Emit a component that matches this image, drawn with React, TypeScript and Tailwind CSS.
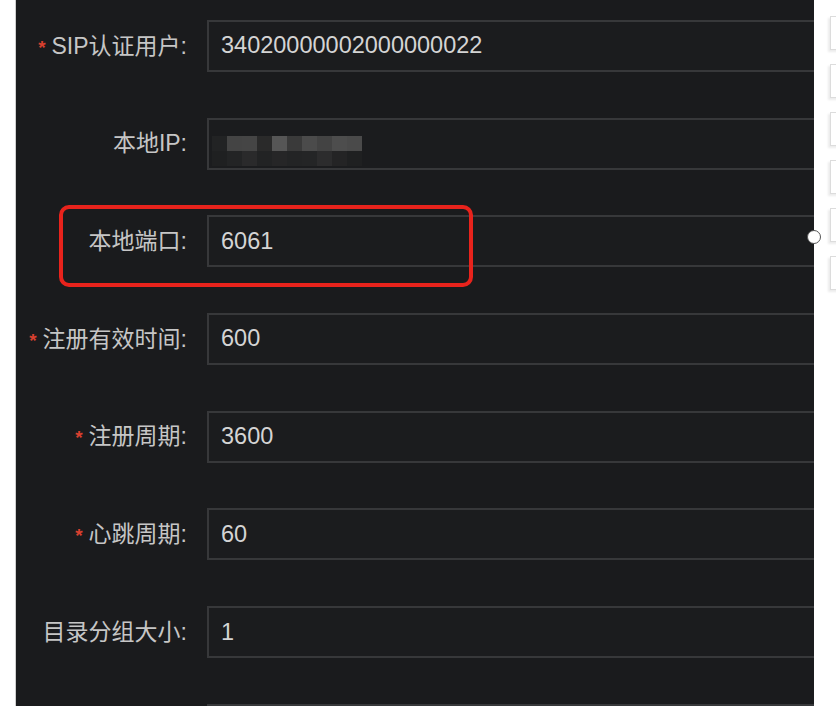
// App.tsx
const rows = [
  { label: 'SIP认证用户:', value: '34020000002000000022', required: true },
  { label: '本地IP:', value: '', masked: true },
  { label: '本地端口:', value: '6061', highlight: true },
  { label: '注册有效时间:', value: '600', required: true },
  { label: '注册周期:', value: '3600', required: true },
  { label: '心跳周期:', value: '60', required: true },
  { label: '目录分组大小:', value: '1' },
  { label: '', value: '' },
]

const maskTop = ['#222324', '#444444', '#454545', '#2a2a2a', '#565656', '#3a3a3a', '#4b4b4b', '#434343', '#4d4d4d', '#4a4a4a']
const maskBottom = ['#1f2021', '#232425', '#2a2a2b', '#222324', '#262627', '#232425', '#242526', '#2c2c2d', '#242425', '#1f2021']

function MaskedIp() {
  return (
    <div className="flex flex-col">
      <div className="flex">
        {maskTop.map((c, i) => (
          <div key={i} className="w-[15px] h-[15px]" style={{ background: c }} />
        ))}
      </div>
      <div className="flex">
        {maskBottom.map((c, i) => (
          <div key={i} className="w-[15px] h-[15px]" style={{ background: c }} />
        ))}
      </div>
    </div>
  )
}

export default function App() {
  return (
    <div className="relative w-[836px] h-[708px] bg-white overflow-hidden flex font-['Liberation_Sans','Noto_Sans_CJK_SC',sans-serif]">
      <div className="ml-[15px] w-[799px] h-[706px] shrink-0 bg-[#1a1b1d] border-l border-[#cfcfcf] overflow-hidden pt-5 flex flex-col gap-[45.7px]">
        {rows.map((row, i) => (
          <div key={i} className="relative flex items-center h-[52px] shrink-0">
            <div className="w-[171px] shrink-0 flex items-center justify-end text-[23px] text-[#c6c6c6] leading-none">
              {row.required && <span className="text-[#d8402f] text-[19px] font-bold mr-[6px] mt-[2px]">*</span>}
              <span>{row.label}</span>
            </div>
            <div className="ml-5 w-[640px] h-[52px] shrink-0 border-2 border-[#37383a] bg-[#1b1c1e] flex items-center pl-3 text-[23.5px] text-[#d4d4d4]">
              {row.masked ? <div className="mt-[14px] -ml-[9px]"><MaskedIp /></div> : row.value}
            </div>
            {row.highlight && (
              <div className="absolute left-[43px] top-[-10px] w-[414px] h-[82px] border-[4px] border-[#e8231c] rounded-[10px]" />
            )}
          </div>
        ))}
      </div>

      <div className="pl-4 pt-4 flex flex-col gap-[14px]">
        {[0, 1, 2, 3, 4, 5].map((i) => (
          <div key={i} className="w-10 h-[34px] shrink-0 border border-[#dcdcdc] shadow-[-2px_2px_2px_rgba(0,0,0,0.08)] bg-white" />
        ))}
      </div>

      <div className="absolute left-[807px] top-[230px] w-[14px] h-[14px] rounded-full bg-white border border-[#555]" />
    </div>
  )
}
